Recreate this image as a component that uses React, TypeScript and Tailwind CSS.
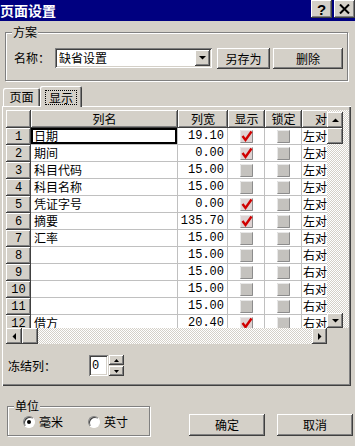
import React from 'react';

const raised =
  'bg-[#d4d0c8] shadow-[inset_-1px_-1px_#404040,inset_1px_1px_#ffffff,inset_-2px_-2px_#808080,inset_2px_2px_#d4d0c8]';
const sunken =
  'bg-white shadow-[inset_1px_1px_#808080,inset_-1px_-1px_#ffffff,inset_2px_2px_#404040,inset_-2px_-2px_#d4d0c8]';
const hatch =
  'bg-[image:repeating-conic-gradient(#ffffff_0_25%,#d4d0c8_0_50%)] bg-[length:2px_2px]';
const etched = 'border border-[#808080] shadow-[inset_1px_1px_#ffffff,1px_1px_#ffffff]';
const headCell =
  'bg-[#d4d0c8] shadow-[inset_-1px_-1px_#404040,inset_1px_1px_#ffffff,inset_-2px_-2px_#808080] flex items-center justify-center';
const mono = "font-['Liberation_Mono',monospace]";

type Dir = 'up' | 'down' | 'left' | 'right';

const Arrow: React.FC<{ dir: Dir }> = ({ dir }) => {
  const vertical = dir === 'up' || dir === 'down';
  const points = {
    up: '0,4 3.5,0.5 7,4',
    down: '0,0 7,0 3.5,3.5',
    left: '4,0 4,7 0.5,3.5',
    right: '0,0 0,7 3.5,3.5',
  }[dir];
  return (
    <svg width={vertical ? 7 : 4} height={vertical ? 4 : 7}>
      <polygon points={points} fill="#000" />
    </svg>
  );
};

const CheckBox: React.FC<{ checked: boolean }> = ({ checked }) => (
  <svg width="13" height="13" viewBox="0 0 13 13">
    <rect x="0" y="0" width="13" height="13" fill={checked ? '#ddd2d2' : '#c4c2be'} />
    <path d="M0.5 12.5 V0.5 H12.5" stroke="#e8e8e8" fill="none" />
    <path d="M12.5 0.5 V12.5 H0.5" stroke="#8c8c8c" fill="none" />
    {checked && (
      <path d="M2.5 6 L5.5 10 L11.5 1.5" stroke="#d00000" strokeWidth="2.4" fill="none" />
    )}
  </svg>
);

const rows = [
  { no: 1, name: '日期', width: '19.10', show: true, align: '左对齐' },
  { no: 2, name: '期间', width: '0.00', show: true, align: '左对齐' },
  { no: 3, name: '科目代码', width: '15.00', show: false, align: '左对齐' },
  { no: 4, name: '科目名称', width: '15.00', show: false, align: '左对齐' },
  { no: 5, name: '凭证字号', width: '0.00', show: true, align: '左对齐' },
  { no: 6, name: '摘要', width: '135.70', show: true, align: '左对齐' },
  { no: 7, name: '汇率', width: '15.00', show: false, align: '右对齐' },
  { no: 8, name: '', width: '15.00', show: false, align: '右对齐' },
  { no: 9, name: '', width: '15.00', show: false, align: '右对齐' },
  { no: 10, name: '', width: '15.00', show: false, align: '右对齐' },
  { no: 11, name: '', width: '15.00', show: false, align: '右对齐' },
  { no: 12, name: '借方', width: '20.40', show: true, align: '右对齐' },
];

const cell = 'bg-white border-r border-b border-[#c0c0c0] h-[17px] flex items-center';

const Radio: React.FC<{ checked: boolean }> = ({ checked }) => (
  <span className="w-[12px] h-[12px] rounded-full bg-white border border-t-[#808080] border-l-[#808080] border-b-white border-r-white shadow-[inset_1px_1px_#404040] flex items-center justify-center">
    {checked && <span className="w-[4px] h-[4px] rounded-full bg-black" />}
  </span>
);

export default function App() {
  return (
    <div className="w-[355px] h-[446px] bg-[#d4d0c8] overflow-hidden text-[12px] leading-[12px] text-black font-['Noto_Sans_CJK_SC',sans-serif]">
      {/* Title bar */}
      <div className="h-[21px] bg-[#000080] flex items-start justify-between">
        <span className="text-white text-[14px] font-bold leading-[21px]">页面设置</span>
        <div className="flex gap-[2px]">
          <button className={`${raised} w-[21px] h-[18px] flex items-center justify-center text-[15px] font-bold leading-none font-['Liberation_Sans',sans-serif]`}>
            ?
          </button>
          <button className={`${raised} w-[21px] h-[18px] flex items-center justify-center`}>
            <svg width="11" height="10" viewBox="0 0 11 10">
              <path d="M1 0.5 L10 9.5 M10 0.5 L1 9.5" stroke="#000" strokeWidth="2" />
            </svg>
          </button>
        </div>
      </div>

      {/* 方案 */}
      <div className={`${etched} relative mt-[11px] ml-[5px] mr-[7px] h-[49px]`}>
        <span className="absolute -top-[7px] left-[6px] px-[1px] bg-[#d4d0c8]">方案</span>
        <div className="flex items-start pt-[15px] pl-[8px]">
          <span className="w-[41px] h-[20px] flex items-center">名称：</span>
          <div className={`${sunken} w-[157px] h-[20px] flex items-center justify-between pl-[4px] pr-[2px]`}>
            <span>缺省设置</span>
            <span className={`${raised} w-[15px] h-[16px] flex items-center justify-center`}>
              <Arrow dir="down" />
            </span>
          </div>
          <button className={`${raised} ml-[5px] w-[53px] h-[21px] flex items-center justify-center`}>另存为</button>
          <button className={`${raised} ml-[3px] w-[70px] h-[21px] flex items-center justify-center`}>删除</button>
        </div>
      </div>

      {/* Tabs */}
      <div className="mt-[5px] h-[20px] flex items-end pl-[3px]">
        <div className="w-[37px] h-[18px] rounded-t-[2px] shadow-[inset_1px_1px_#ffffff,inset_-1px_0_#404040,inset_-2px_0_#808080] flex items-center justify-center">
          页面
        </div>
        <div className="relative z-10 w-[42px] h-[21px] -mb-[1px] bg-[#d4d0c8] rounded-t-[2px] shadow-[inset_1px_1px_#ffffff,inset_-1px_0_#404040,inset_-2px_0_#808080] flex items-start justify-center pt-[4px]">
          <span className="border border-dotted border-black px-[3px] h-[15px] flex items-center">显示</span>
        </div>
      </div>

      {/* Tab panel */}
      <div className="ml-[2px] w-[349px] h-[280px] shadow-[inset_1px_1px_#ffffff,inset_-1px_-1px_#404040,inset_-2px_-2px_#808080] pt-[4px] pl-[4px]">
        <div className="flex">
          <div className="w-[321px] h-[218px] overflow-hidden">
            <div className="w-[360px]">
              <div className="flex h-[18px]">
                <div className={`${headCell} w-[25px]`} />
                <div className={`${headCell} w-[147px]`}>列名</div>
                <div className={`${headCell} w-[50px]`}>列宽</div>
                <div className={`${headCell} w-[37px]`}>显示</div>
                <div className={`${headCell} w-[37px]`}>锁定</div>
                <div className={`${headCell} w-[50px]`}>对齐</div>
              </div>
              {rows.map((r) => (
                <div key={r.no} className="flex h-[17px]">
                  <div className={`${headCell} w-[25px] h-[17px] ${mono}`}>{r.no}</div>
                  <div
                    className={`${cell} w-[147px] pl-[3px] ${r.no === 1 ? 'shadow-[inset_0_0_0_2px_#000]' : ''}`}
                  >
                    {r.name}
                  </div>
                  <div className={`${cell} w-[50px] justify-end pr-[3px] ${mono}`}>{r.width}</div>
                  <div className={`${cell} w-[37px] justify-center`}>
                    <CheckBox checked={r.show} />
                  </div>
                  <div className={`${cell} w-[37px] justify-center`}>
                    <CheckBox checked={false} />
                  </div>
                  <div className={`${cell} w-[50px] pl-[1px] overflow-hidden whitespace-nowrap`}>{r.align}</div>
                </div>
              ))}
            </div>
          </div>
          <div className={`${hatch} w-[22px] h-[218px] flex flex-col`}>
            <div className={`${raised} mt-[2px] w-[16px] h-[16px] flex items-center justify-center`}>
              <Arrow dir="up" />
            </div>
            <div className={`${raised} w-[16px] h-[16px]`} />
            <div className="flex-1" />
            <div className={`${raised} w-[16px] h-[15px] flex items-center justify-center`}>
              <Arrow dir="down" />
            </div>
          </div>
        </div>
        <div className={`${hatch} w-[321px] h-[16px] flex`}>
          <div className={`${raised} w-[16px] h-[16px] flex items-center justify-center`}>
            <Arrow dir="left" />
          </div>
          <div className={`${raised} w-[16px] h-[16px]`} />
          <div className="flex-1" />
          <div className={`${raised} w-[15px] h-[16px] flex items-center justify-center`}>
            <Arrow dir="right" />
          </div>
        </div>

        <div className="mt-[11px] ml-[2px] flex items-center h-[21px]">
          <span className="w-[81px]">冻结列：</span>
          <div className={`${sunken} w-[19px] h-[21px] pl-[3px] flex items-center ${mono}`}>0</div>
          <div className="ml-[1px] flex flex-col gap-[1px]">
            <span className={`${raised} w-[15px] h-[10px] flex items-center justify-center`}>
              <svg width="5" height="3"><polygon points="0,3 2.5,0 5,3" fill="#000" /></svg>
            </span>
            <span className={`${raised} w-[15px] h-[10px] flex items-center justify-center`}>
              <svg width="5" height="3"><polygon points="0,0 5,0 2.5,3" fill="#000" /></svg>
            </span>
          </div>
        </div>
      </div>

      {/* Bottom */}
      <div className="flex items-start">
        <div className={`${etched} relative mt-[20px] ml-[7px] w-[143px] h-[30px] flex items-center pl-[15px] pt-[1px]`}>
          <span className="absolute -top-[7px] left-[6px] px-[1px] bg-[#d4d0c8]">单位</span>
          <Radio checked />
          <span className="ml-[4px]">毫米</span>
          <span className="ml-[25px]">
            <Radio checked={false} />
          </span>
          <span className="ml-[4px]">英寸</span>
        </div>
        <button className={`${raised} mt-[28px] ml-[39px] w-[76px] h-[22px] flex items-center justify-center`}>确定</button>
        <button className={`${raised} mt-[28px] ml-[12px] w-[76px] h-[22px] flex items-center justify-center`}>取消</button>
      </div>
    </div>
  );
}
